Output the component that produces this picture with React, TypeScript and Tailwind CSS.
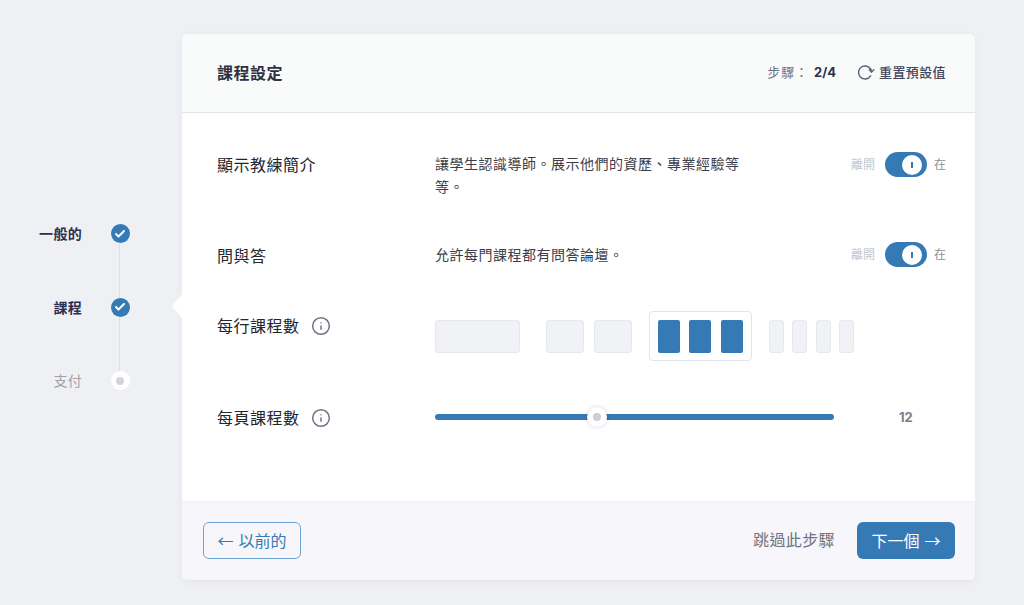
import { Check, Info } from "lucide-react";

const FONT = "font-['Inter','Noto_Sans_CJK_TC',sans-serif]";

const Toggle = () => (
  <div className="flex items-center">
    <span className="w-[24px] text-[12px] leading-none text-[#c4c6cc]">離開</span>
    <div className="ml-[10px] flex h-[25px] w-[42px] items-center justify-end rounded-full bg-[#367ab5] pr-[5px]">
      <div className="flex h-[20px] w-[20px] items-center justify-center rounded-full bg-white">
        <div className="h-[6px] w-[2px] bg-[#367ab5]" />
      </div>
    </div>
    <span className="ml-[7px] text-[12px] leading-none text-[#8d8f97]">在</span>
  </div>
);

const Step = ({ label, state, last }: { label: string; state: "done" | "todo"; last?: boolean }) => (
  <div className="relative flex h-[73.5px] items-center">
    <span
      className={
        "w-[82px] text-right text-[14px] tracking-[0.3px] " +
        (state === "done" ? "font-bold text-[#2c3153]" : "text-[#a0a2a9]")
      }
    >
      {label}
    </span>
    <div className="ml-[28px] flex h-[20px] w-[20px] items-center justify-center">
      {state === "done" ? (
        <div className="flex h-[19px] w-[19px] items-center justify-center rounded-full bg-[#367ab5]">
          <Check className="h-[12px] w-[12px] text-white" strokeWidth={4} />
        </div>
      ) : (
        <div className="flex h-[19px] w-[19px] items-center justify-center rounded-full bg-white">
          <div className="h-[8px] w-[8px] rounded-full bg-[#d3d4da]" />
        </div>
      )}
    </div>
    {!last && <div className="absolute left-[119px] top-[47px] h-[54px] w-px bg-[#dfe0e6]" />}
  </div>
);

const Block = ({ className }: { className: string }) => (
  <div className={"h-[33px] rounded-[3px] border border-[#e6e8ee] bg-[#f1f2f6] " + className} />
);

const Label = ({ text, info }: { text: string; info?: boolean }) => (
  <div className="flex w-[218px] shrink-0 items-center text-[16px] leading-[24px] tracking-[0.5px] text-[#23252f]">
    {text}
    {info && <Info className="ml-[11px] h-[20px] w-[20px] text-[#6f7486]" strokeWidth={1.8} />}
  </div>
);

export default function App() {
  return (
    <div className={"flex h-[605px] w-[1024px] overflow-hidden bg-[#eff0f4] pb-[25px] pt-[34px] " + FONT}>
      <aside className="flex w-[182px] shrink-0 flex-col justify-center">
        <Step label="一般的" state="done" />
        <Step label="課程" state="done" />
        <Step label="支付" state="todo" last />
      </aside>

      <main className="relative flex w-[793px] flex-col rounded-[6px] bg-white shadow-[0_2px_8px_rgba(40,50,90,0.05)]">
        <div className="absolute -left-[10px] top-[260px] h-0 w-0 border-y-[12px] border-r-[10px] border-y-transparent border-r-white" />

        <header className="flex h-[79px] shrink-0 items-center justify-between rounded-t-[6px] border-b border-[#e3e5e8] bg-[#f9fbfb] pl-[35px] pr-[29px]">
          <h1 className="text-[16px] font-semibold tracking-[0.5px] text-[#2f3140]">課程設定</h1>
          <div className="flex items-center">
            <span className="text-[13px] tracking-[0.9px] text-[#6f7486]">步驟：</span>
            <span className="ml-[5px] text-[13px] font-bold text-[#2c3153]">2/4</span>
            <svg className="mb-[2px] ml-[21px] h-[18px] w-[18px]" viewBox="0 0 18 18" fill="none" stroke="#5c6070" strokeWidth="1.4" strokeLinecap="round" strokeLinejoin="round">
              <path d="M13.6 12.8A6.5 6.5 0 1 1 14.5 9" />
              <path d="M12.3 6.8L14.5 9L16.9 6.8" />
            </svg>
            <span className="ml-[4px] text-[13px] font-medium tracking-[0.4px] text-[#43465a]">重置預設值</span>
          </div>
        </header>

        <section className="flex flex-1 flex-col pl-[35px] pr-[29px] pt-[39px]">
          <div className="flex h-[90px] items-start">
            <div className="pt-[1px]">
              <Label text="顯示教練簡介" />
            </div>
            <p className="w-[315px] text-[14px] leading-[23px] tracking-[0.5px] text-[#3b3d4a]">
              讓學生認識導師。展示他們的資歷、專業經驗等等。
            </p>
            <div className="ml-auto">
              <Toggle />
            </div>
          </div>

          <div className="flex h-[69px] items-start">
            <div className="pt-[2px]">
              <Label text="問與答" />
            </div>
            <p className="text-[14px] leading-[25px] tracking-[0.5px] text-[#3b3d4a]">
              允許每門課程都有問答論壇。
            </p>
            <div className="ml-auto">
              <Toggle />
            </div>
          </div>

          <div className="flex h-[93px] items-start">
            <div className="pt-[3px]">
              <Label text="每行課程數" info />
            </div>
            <div className="flex h-[50px] items-center">
              <Block className="w-[85px]" />
              <div className="ml-[26px] flex gap-[10px]">
                <Block className="w-[38px]" />
                <Block className="w-[38px]" />
              </div>
              <div className="ml-[17px] flex h-[50px] w-[103px] items-center gap-[9.3px] rounded-[4px] border border-[#e3e5ec] pl-[8px]">
                <div className="h-[33px] w-[22px] rounded-[2px] bg-[#367ab5]" />
                <div className="h-[33px] w-[22px] rounded-[2px] bg-[#367ab5]" />
                <div className="h-[33px] w-[22px] rounded-[2px] bg-[#367ab5]" />
              </div>
              <div className="ml-[17px] flex gap-[8.3px]">
                <Block className="w-[15px]" />
                <Block className="w-[15px]" />
                <Block className="w-[15px]" />
                <Block className="w-[15px]" />
              </div>
            </div>
          </div>

          <div className="flex h-[26px] items-center">
            <div className="pt-[1px]">
              <Label text="每頁課程數" info />
            </div>
            <div className="relative h-[6px] w-[399px] rounded-full bg-[#367ab5]">
              <div className="absolute left-[152px] top-[-7px] flex h-[20px] w-[20px] items-center justify-center rounded-full bg-white shadow-[0_0_4px_rgba(40,50,90,0.2)]">
                <div className="h-[8px] w-[8px] rounded-full bg-[#cdced4]" />
              </div>
            </div>
            <span className="ml-[65px] pt-[1px] text-[13px] font-bold text-[#7b7e8a]">12</span>
          </div>
        </section>

        <footer className="flex h-[79px] shrink-0 items-center justify-between rounded-b-[6px] border-t border-[#f0f1f5] bg-[#f7f7fb] pb-[2px] pl-[21px] pr-[20px]">
          <button className="flex h-[37px] w-[98px] items-center justify-center gap-[5px] rounded-[6px] border border-[#6ea4d4] font-['Noto_Sans_CJK_TC',sans-serif] text-[16px] text-[#367ab5]">
            <span>←</span>
            <span>以前的</span>
          </button>
          <div className="flex items-center">
            <span className="text-[16px] tracking-[0.4px] text-[#70737f]">跳過此步驟</span>
            <button className="ml-[22px] flex h-[37px] w-[98px] items-center justify-center gap-[5px] rounded-[6px] bg-[#367ab5] font-['Noto_Sans_CJK_TC',sans-serif] text-[16px] text-white">
              <span>下一個</span>
              <span>→</span>
            </button>
          </div>
        </footer>
      </main>
    </div>
  );
}
